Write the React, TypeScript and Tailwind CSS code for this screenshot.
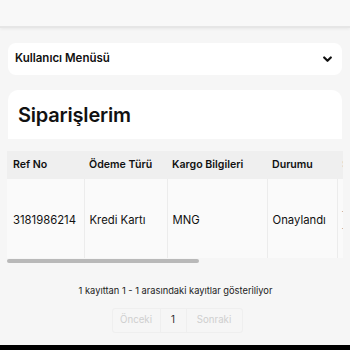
import React from "react";

export default function App() {
  const font = { fontFamily: "Inter, 'Noto Sans', sans-serif" };
  return (
    <div className="w-[350px] h-[350px] overflow-hidden bg-[#f6f6f6] flex flex-col text-[#111]" style={font}>
      <div className="h-[28px] shrink-0 bg-[#f8f8f8] border-b-2 border-[#e6e6e6] shadow-[0_1px_3px_rgba(0,0,0,0.06)]" />
      <div className="px-[8px] pt-[15px] flex flex-col">
        <div className="h-[32px] bg-white rounded-[8px] flex items-center justify-between pl-[7px] pr-[10px]">
          <span className="text-[11.5px] font-semibold">Kullanıcı Menüsü</span>
          <svg width="9" height="7" viewBox="0 0 9 7" className="mt-[1px]">
            <path d="M1.2 1.5 L4.5 4.8 L7.8 1.5" fill="none" stroke="#111" strokeWidth="2.2" strokeLinecap="round" strokeLinejoin="round" />
          </svg>
        </div>
        <div className="mt-[15px] h-[49px] bg-white rounded-t-[10px] flex items-center pl-[10px] pt-[1px]">
          <h1 className="text-[20px] font-semibold tracking-[-0.2px]">Siparişlerim</h1>
        </div>
      </div>
      <div className="mt-[12px] ml-[7px] mr-[7px] overflow-hidden">
        <table className="table-fixed w-[430px] border-collapse text-[11.3px] whitespace-nowrap">
          <colgroup>
            <col className="w-[77px]" />
            <col className="w-[83px]" />
            <col className="w-[100px]" />
            <col className="w-[70px]" />
            <col className="w-[100px]" />
          </colgroup>
          <thead>
            <tr className="bg-[#efefef] h-[28px]">
              <th className="text-left font-semibold text-[10.6px] pl-[6px]">Ref No</th>
              <th className="text-left font-semibold text-[10.6px] pl-[5px]">Ödeme Türü</th>
              <th className="text-left font-semibold text-[10.6px] pl-[5px]">Kargo Bilgileri</th>
              <th className="text-left font-semibold text-[10.6px] pl-[5px]">Durumu</th>
              <th className="text-left font-semibold text-[10.6px] pl-[5px] text-[#bbb]">Sipariş Tarihi</th>
            </tr>
          </thead>
          <tbody>
            <tr className="bg-[#fafafa] h-[79px]">
              <td className="pl-[6px] pt-[3px] border-r border-[#ececec]">3181986214</td>
              <td className="pl-[5px] pt-[3px] border-r border-[#ececec]">Kredi Kartı</td>
              <td className="pl-[5px] pt-[3px] border-r border-[#ececec]">MNG</td>
              <td className="pl-[5px] pt-[3px] border-r border-[#ececec]">Onaylandı</td>
              <td className="pl-[4px] pt-[3px] leading-[17px] text-[#999]">
                <div>-</div>
                <div>-</div>
              </td>
            </tr>
          </tbody>
        </table>
        <div className="h-[6px] flex items-center">
          <div className="w-[192px] h-[4px] rounded-full bg-[#b9b9b9]" />
        </div>
      </div>
      <div className="mt-[20px] text-center text-[9.3px] text-[#222] pl-[1px]">1 kayıttan 1 - 1 arasındaki kayıtlar gösteriliyor</div>
      <div className="mt-[10px] flex justify-center">
        <div className="flex h-[25px] border border-[#efefef] rounded-[3px] text-[9.7px] ml-[4px]">
          <div className="w-[48px] flex items-center justify-center text-[#cfcfcf] border-r border-[#efefef]">Önceki</div>
          <div className="w-[26px] flex items-center justify-center text-[#222] border-r border-[#efefef]">1</div>
          <div className="w-[55px] flex items-center justify-center text-[#cfcfcf]">Sonraki</div>
        </div>
      </div>
      <div className="mt-auto h-[5px] bg-black shrink-0" />
    </div>
  );
}
